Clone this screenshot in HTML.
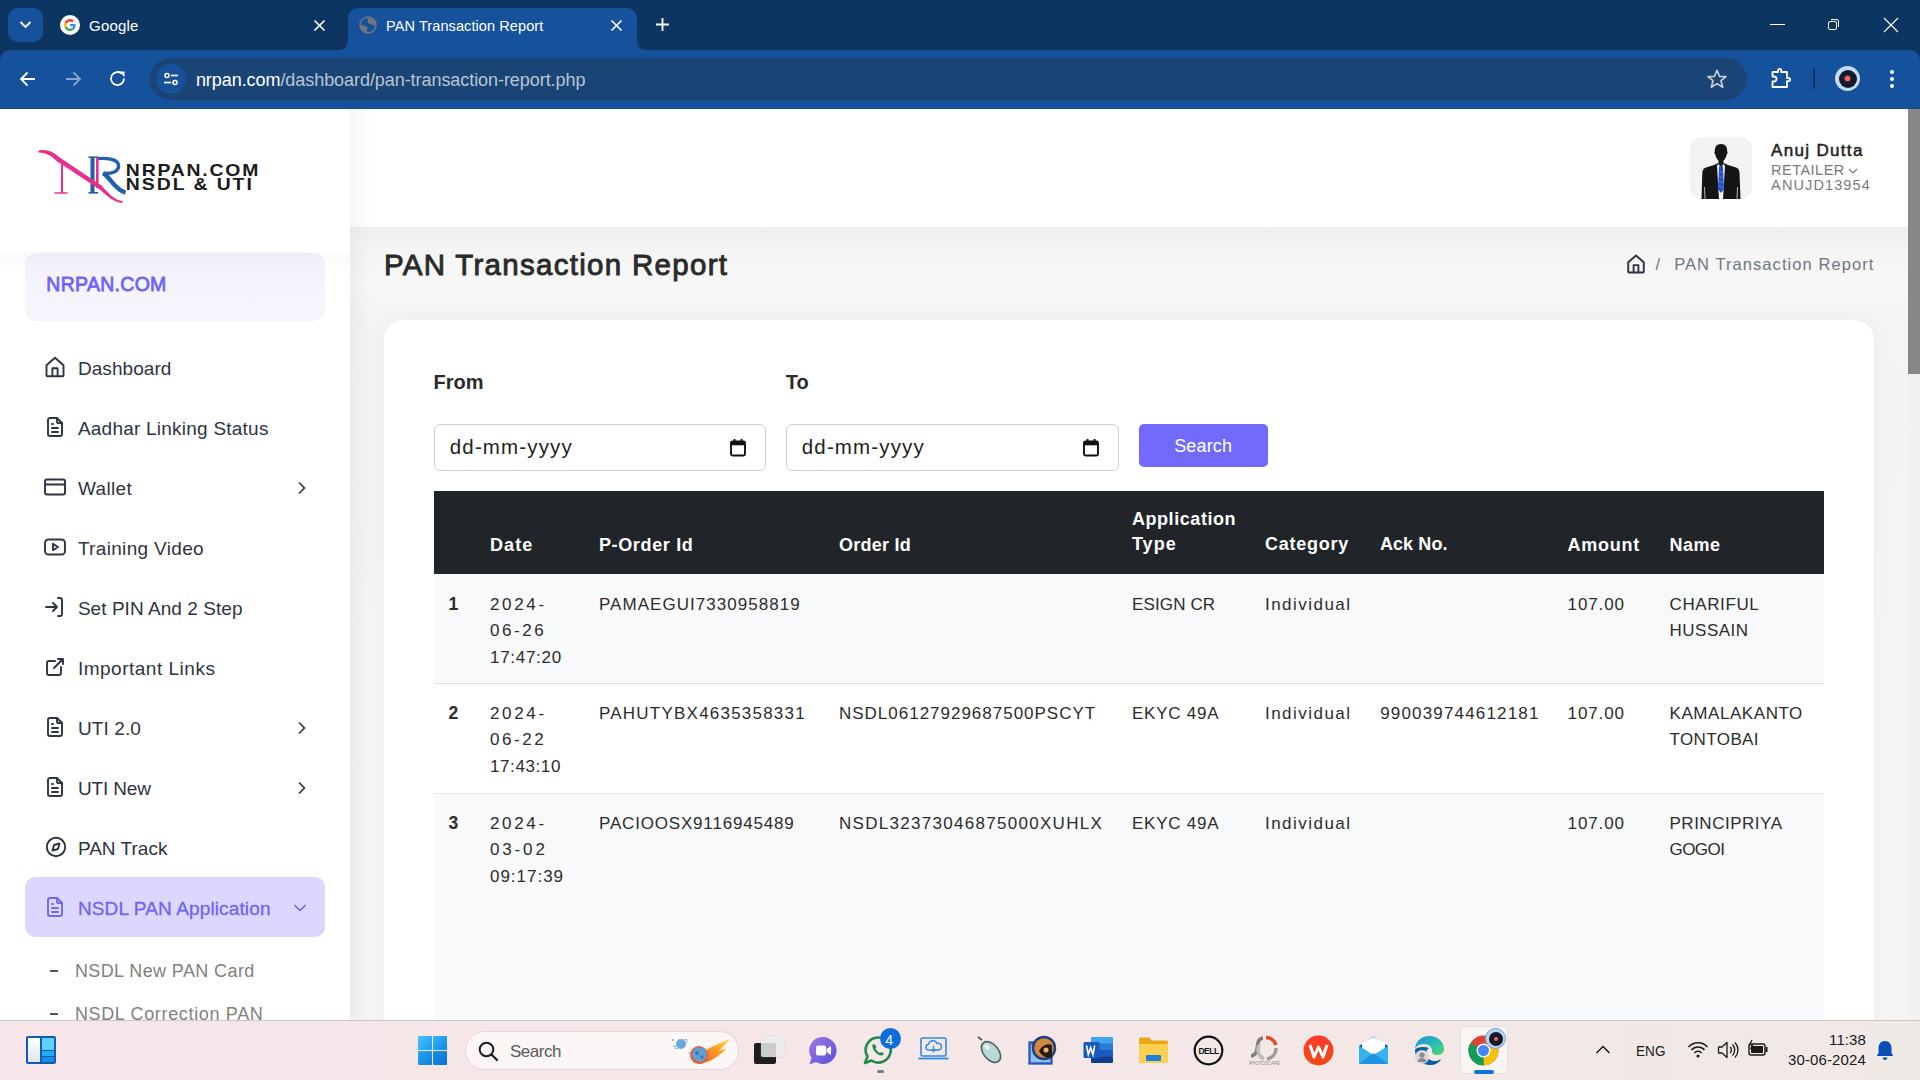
<!DOCTYPE html>
<html><head><meta charset="utf-8"><title>PAN Transaction Report</title>
<style>
*{margin:0;padding:0;box-sizing:border-box}
html,body{width:1920px;height:1080px;overflow:hidden;background:#f3f4f4;position:relative;font-family:"Liberation Sans",sans-serif}
.r{position:absolute}
.t{position:absolute;white-space:nowrap;font-family:"Liberation Sans",sans-serif}
</style></head>
<body>

<div class="r" style="left:0;top:0;width:1920px;height:70px;background:#0d3562"></div>
<div class="r" style="left:8px;top:8px;width:35px;height:34px;border-radius:10px;background:#15529b"></div>
<svg class="r" style="left:18px;top:17px" width="15" height="15" viewBox="0 0 15 15"><path d="M2.5 5 L7.5 10 L12.5 5" fill="none" stroke="#fff" stroke-width="1.8"/></svg>
<!-- google tab -->
<svg class="r" style="left:60px;top:15px" width="20" height="20" viewBox="0 0 20 20">
<circle cx="10" cy="10" r="10" fill="#fff"/>
<path d="M15.6 10.2c0-.4 0-.8-.1-1.2H10v2.3h3.2c-.1.7-.6 1.4-1.2 1.8l1.9 1.5c1.1-1 1.7-2.6 1.7-4.4z" fill="#4285F4"/>
<path d="M10 16c1.6 0 2.9-.5 3.9-1.4l-1.9-1.5c-.5.4-1.2.6-2 .6-1.5 0-2.8-1-3.3-2.4l-2 1.5C5.7 14.7 7.7 16 10 16z" fill="#34A853"/>
<path d="M6.7 11.3c-.1-.4-.2-.8-.2-1.3s.1-.9.2-1.3l-2-1.5C4.3 8 4 9 4 10s.3 2 .7 2.8l2-1.5z" fill="#FBBC05"/>
<path d="M10 6.4c.9 0 1.6.3 2.2.9l1.7-1.7C12.9 4.6 11.6 4 10 4 7.7 4 5.7 5.3 4.7 7.2l2 1.5C7.2 7.4 8.5 6.4 10 6.4z" fill="#EA4335"/>
</svg>
<svg class="r" style="left:313px;top:19px" width="13" height="13" viewBox="0 0 13 13"><path d="M1.5 1.5 L11.5 11.5 M11.5 1.5 L1.5 11.5" stroke="#fff" stroke-width="1.6"/></svg>
<!-- active tab -->
<div class="r" style="left:348px;top:8px;width:289px;height:43px;background:#15529b;border-radius:10px 10px 0 0"></div>
<svg class="r" style="left:338px;top:40px" width="10" height="10" viewBox="0 0 10 10"><path d="M0 10 Q10 10 10 0 L10 10 Z" fill="#15529b"/></svg>
<svg class="r" style="left:637px;top:40px" width="10" height="10" viewBox="0 0 10 10"><path d="M10 10 Q0 10 0 0 L0 10 Z" fill="#15529b"/></svg>
<svg class="r" style="left:359px;top:16px" width="18" height="18" viewBox="0 0 18 18"><circle cx="9" cy="9" r="8" fill="none" stroke="#71787f" stroke-width="1.5"/><path d="M8.2 2 C11 1.5 14.5 3 16 6 L16.5 9 C15.5 9.8 13.8 9.6 13 8.8 C12.3 8 11 8.3 9.8 7.6 C8.7 7 8.3 6.2 8.8 5.2 C9.2 4.2 8.5 3.3 8.2 2 Z" fill="#71787f"/><path d="M1.5 9.5 C3 9 4.8 9.3 6.3 9.9 C7.8 10.5 8.8 11.2 8.4 12.6 C8.1 13.8 7.6 14.5 8.3 16.3 C4.8 16.2 2 13.3 1.5 9.5 Z" fill="#71787f"/></svg>
<svg class="r" style="left:610px;top:19px" width="13" height="13" viewBox="0 0 13 13"><path d="M1.5 1.5 L11.5 11.5 M11.5 1.5 L1.5 11.5" stroke="#fff" stroke-width="1.6"/></svg>
<svg class="r" style="left:655px;top:17px" width="15" height="15" viewBox="0 0 15 15"><path d="M7.5 1 V14 M1 7.5 H14" stroke="#fff" stroke-width="1.8"/></svg>
<!-- window controls -->
<div class="r" style="left:1770px;top:24px;width:15px;height:1px;background:#fff"></div>
<svg class="r" style="left:1826px;top:16px" width="16" height="16" viewBox="0 0 16 16"><rect x="2.5" y="5.5" width="8" height="8" rx="1.5" fill="none" stroke="#fff" stroke-width="1"/><path d="M5 3.5 H11 Q12.5 3.5 12.5 5 V11" fill="none" stroke="#fff" stroke-width="1"/></svg>
<svg class="r" style="left:1883px;top:17px" width="16" height="16" viewBox="0 0 16 16"><path d="M1 1 L15 15 M15 1 L1 15" stroke="#fff" stroke-width="1.1"/></svg>
<!-- toolbar -->
<div class="r" style="left:0;top:50px;width:1920px;height:59px;background:#15529b;border-radius:10px 10px 0 0"></div>
<div class="r" style="left:0;top:108px;width:1920px;height:1px;background:#114b90"></div>
<svg class="r" style="left:18px;top:69px" width="20" height="20" viewBox="0 0 20 20"><path d="M17 10 H3.5 M9.5 3.5 L3 10 L9.5 16.5" fill="none" stroke="#fff" stroke-width="1.8"/></svg>
<svg class="r" style="left:63px;top:69px" width="20" height="20" viewBox="0 0 20 20"><path d="M3 10 H16.5 M10.5 3.5 L17 10 L10.5 16.5" fill="none" stroke="#8aa6cc" stroke-width="1.8"/></svg>
<svg class="r" style="left:108px;top:69px" width="20" height="20" viewBox="0 0 20 20"><path d="M16 9.5 A6.5 6.5 0 1 1 13.2 4.2" fill="none" stroke="#fff" stroke-width="1.8"/><path d="M11 2.5 H16.5 V8 Z" fill="#fff"/></svg>
<div class="r" style="left:150px;top:58px;width:1597px;height:42px;border-radius:21px;background:#1a4476"></div>
<div class="r" style="left:156px;top:64px;width:30px;height:30px;border-radius:15px;background:#15529b"></div>
<svg class="r" style="left:161px;top:69px" width="20" height="20" viewBox="0 0 20 20"><circle cx="6" cy="6.5" r="2" fill="none" stroke="#fff" stroke-width="1.6"/><path d="M10 6.5 H17" stroke="#fff" stroke-width="1.7"/><circle cx="14" cy="13.5" r="2" fill="none" stroke="#fff" stroke-width="1.6"/><path d="M3 13.5 H10" stroke="#fff" stroke-width="1.7"/></svg>
<svg class="r" style="left:1705px;top:67px" width="24" height="24" viewBox="0 0 24 24"><path d="M12 3.2 L14.5 9.3 L21 9.6 L16 13.7 L17.7 20.2 L12 16.6 L6.3 20.2 L8 13.7 L3 9.6 L9.5 9.3 Z" fill="none" stroke="#c7cbd1" stroke-width="1.7" stroke-linejoin="round"/></svg>
<svg class="r" style="left:1769px;top:66px" width="24" height="24" viewBox="0 0 24 24"><path d="M3.5 6 H9 V4.5 A1.6 1.6 0 0 1 12.2 4.5 V6 H18 V12 H19.5 A1.6 1.6 0 0 1 19.5 15.2 H18 V21 H3.5 V15.5 H5 A2.5 2.5 0 0 0 5 10.5 H3.5 Z" fill="none" stroke="#fff" stroke-width="1.8" stroke-linejoin="round"/></svg>
<div class="r" style="left:1813px;top:69px;width:2px;height:20px;background:#0f3464"></div>
<div class="r" style="left:1835px;top:66px;width:25px;height:25px;border-radius:50%;background:#c2dbf6"></div>
<div class="r" style="left:1838.5px;top:69.5px;width:18px;height:18px;border-radius:50%;background:#141a2a"></div>
<div class="r" style="left:1845px;top:76px;width:5px;height:5px;border-radius:50%;background:#ff5a6e;box-shadow:0 0 2px #ffb347"></div>
<div class="r" style="left:1890px;top:70px;width:4px;height:4px;border-radius:50%;background:#fff"></div>
<div class="r" style="left:1890px;top:77px;width:4px;height:4px;border-radius:50%;background:#fff"></div>
<div class="r" style="left:1890px;top:84px;width:4px;height:4px;border-radius:50%;background:#fff"></div>


<div class="r" style="left:350px;top:227px;width:1558px;height:793px;background:linear-gradient(#eef0f0 0px,#f5f5f5 30px,#f7f7f7 60px,#f4f4f4 90px,#f3f3f3 200px,#f5f5f5 400px)"></div>
<div class="r" style="left:0;top:109px;width:350px;height:911px;background:#fff"></div>
<div class="r" style="left:350px;top:109px;width:1558px;height:118px;background:#ffffff"></div>
<div class="r" style="left:350px;top:109px;width:22px;height:911px;background:linear-gradient(90deg,rgba(0,0,0,0.035),rgba(0,0,0,0))"></div>
<div class="r" style="left:1908px;top:109px;width:12px;height:911px;background:#f1f1f1"></div>
<div class="r" style="left:1908px;top:109px;width:12px;height:265px;background:#878787"></div>


<!-- logo -->
<svg class="r" style="left:30px;top:140px" width="100" height="70" viewBox="0 0 100 70" fill="none" stroke-linecap="butt">
 <path d="M62.5 17 V53" stroke="#1f5fae" stroke-width="4"/>
 <path d="M58.5 17.2 H68" stroke="#1f5fae" stroke-width="1.6"/>
 <path d="M58.5 52.8 H68" stroke="#1f5fae" stroke-width="1.6"/>
 <path d="M66 18.6 C78 17.6 88.6 19.5 88.6 26 C88.6 31.5 82 34 73.5 33.5" stroke="#1f5fae" stroke-width="3.4"/>
 <path d="M73 33 C80 37 85 50 95.5 52.5" stroke="#1f5fae" stroke-width="4.4"/>
 <path d="M8.5 10.6 C16 9 23 11.5 29 17 L71.5 45.5 C78 53 85 60.5 92.5 61 L92.5 63 C84 62.5 77 56 69 49 L26.5 21 C21 15.5 15 12.5 8.5 12.6 Z" fill="#e8308a" stroke="none"/>
 
 
 <path d="M32 21 V53" stroke="#e8308a" stroke-width="2"/>
 <path d="M24.5 53 H37.5" stroke="#e8308a" stroke-width="1.5"/>
 <path d="M67.3 17.5 V48" stroke="#e8308a" stroke-width="2.6"/>
</svg>
<div class="r" style="left:25px;top:253px;width:300px;height:68px;border-radius:12px;background:linear-gradient(#f2f1fa,#f5f4fd 40%,#f6f5fe)"></div>
<div class="r" style="left:0;top:252px;width:350px;height:24px;background:linear-gradient(rgba(0,0,0,0.02),rgba(0,0,0,0))"></div>
<div class="r" style="left:25px;top:877px;width:300px;height:60px;border-radius:10px;background:#dcd8fd"></div>

<svg class="r" style="left:43px;top:355px" width="24" height="24" viewBox="0 0 24 24" fill="none" stroke="#2e3441" stroke-width="1.9" stroke-linecap="round" stroke-linejoin="round"><path d="M3.5 20.2 V10.2 L12 2.8 L20.5 10.2 V20.2 Q20.5 21.2 19.5 21.2 H4.5 Q3.5 21.2 3.5 20.2 Z"/><path d="M9.4 21 V13.2 H14.6 V21"/></svg>
<svg class="r" style="left:43px;top:415px" width="24" height="24" viewBox="0 0 24 24" fill="none" stroke="#2e3441" stroke-width="1.9" stroke-linecap="round" stroke-linejoin="round"><path d="M14 3 V7 A1 1 0 0 0 15 8 H19"/><path d="M17 21 H7 A2 2 0 0 1 5 19 V5 A2 2 0 0 1 7 3 H14 L19 8 V19 A2 2 0 0 1 17 21 Z"/><path d="M9 9 H10 M9 13 H15 M9 17 H15"/></svg>
<svg class="r" style="left:43px;top:475px" width="24" height="24" viewBox="0 0 24 24" fill="none" stroke="#2e3441" stroke-width="1.9" stroke-linecap="round" stroke-linejoin="round"><rect x="2" y="4.5" width="20" height="15" rx="2"/><path d="M2.5 9.5 H21.5"/></svg>
<svg class="r" style="left:43px;top:535px" width="24" height="24" viewBox="0 0 24 24" fill="none" stroke="#2e3441" stroke-width="1.9" stroke-linecap="round" stroke-linejoin="round"><rect x="2" y="4.5" width="20" height="15" rx="3.5"/><path d="M10 8.8 L15 12 L10 15.2 Z"/></svg>
<svg class="r" style="left:43px;top:595px" width="24" height="24" viewBox="0 0 24 24" fill="none" stroke="#2e3441" stroke-width="1.9" stroke-linecap="round" stroke-linejoin="round"><path d="M15 3 H17 A2 2 0 0 1 19 5 V19 A2 2 0 0 1 17 21 H15"/><path d="M3 12 H14 M10 8 L14 12 L10 16"/></svg>
<svg class="r" style="left:43px;top:655px" width="24" height="24" viewBox="0 0 24 24" fill="none" stroke="#2e3441" stroke-width="1.9" stroke-linecap="round" stroke-linejoin="round"><path d="M12 6 H6 A2 2 0 0 0 4 8 V18 A2 2 0 0 0 6 20 H16 A2 2 0 0 0 18 18 V12"/><path d="M11 13 L20 4 M15 4 H20 V9"/></svg>
<svg class="r" style="left:43px;top:715px" width="24" height="24" viewBox="0 0 24 24" fill="none" stroke="#2e3441" stroke-width="1.9" stroke-linecap="round" stroke-linejoin="round"><path d="M14 3 V7 A1 1 0 0 0 15 8 H19"/><path d="M17 21 H7 A2 2 0 0 1 5 19 V5 A2 2 0 0 1 7 3 H14 L19 8 V19 A2 2 0 0 1 17 21 Z"/><path d="M9 9 H10 M9 13 H15 M9 17 H15"/></svg>
<svg class="r" style="left:43px;top:775px" width="24" height="24" viewBox="0 0 24 24" fill="none" stroke="#2e3441" stroke-width="1.9" stroke-linecap="round" stroke-linejoin="round"><path d="M14 3 V7 A1 1 0 0 0 15 8 H19"/><path d="M17 21 H7 A2 2 0 0 1 5 19 V5 A2 2 0 0 1 7 3 H14 L19 8 V19 A2 2 0 0 1 17 21 Z"/><path d="M9 9 H10 M9 13 H15 M9 17 H15"/></svg>
<svg class="r" style="left:44px;top:835px" width="24" height="24" viewBox="0 0 24 24" fill="none" stroke="#2e3441" stroke-width="1.9" stroke-linecap="round" stroke-linejoin="round"><circle cx="12" cy="12" r="9.2"/><path d="M8.5 15.5 L10 10 L15.5 8.5 L14 14 Z"/></svg>
<svg class="r" style="left:43px;top:895px" width="24" height="24" viewBox="0 0 24 24" fill="none" stroke="#7367f0" stroke-width="1.9" stroke-linecap="round" stroke-linejoin="round"><path d="M14 3 V7 A1 1 0 0 0 15 8 H19"/><path d="M17 21 H7 A2 2 0 0 1 5 19 V5 A2 2 0 0 1 7 3 H14 L19 8 V19 A2 2 0 0 1 17 21 Z"/><path d="M9 9 H10 M9 13 H15 M9 17 H15"/></svg>
<svg class="r" style="left:295px;top:480.5px" width="14" height="14" viewBox="0 0 14 14"><path d="M4.5 2 L9.5 7 L4.5 12" fill="none" stroke="#2e3441" stroke-width="1.7" stroke-linecap="round" stroke-linejoin="round"/></svg>
<svg class="r" style="left:295px;top:720.5px" width="14" height="14" viewBox="0 0 14 14"><path d="M4.5 2 L9.5 7 L4.5 12" fill="none" stroke="#2e3441" stroke-width="1.7" stroke-linecap="round" stroke-linejoin="round"/></svg>
<svg class="r" style="left:295px;top:780.5px" width="14" height="14" viewBox="0 0 14 14"><path d="M4.5 2 L9.5 7 L4.5 12" fill="none" stroke="#2e3441" stroke-width="1.7" stroke-linecap="round" stroke-linejoin="round"/></svg>
<svg class="r" style="left:292.5px;top:900.5px" width="14" height="14" viewBox="0 0 14 14"><path d="M2 4.5 L7 9.5 L12 4.5" fill="none" stroke="#7367f0" stroke-width="1.7" stroke-linecap="round" stroke-linejoin="round"/></svg>
<div class="r" style="left:50px;top:970px;width:8px;height:2px;background:#555"></div>
<div class="r" style="left:50px;top:1013px;width:8px;height:2px;background:#555"></div>

<div class="r" style="left:1690px;top:137px;width:62px;height:62px;border-radius:12px;background:#f3f3f3"></div>
<svg class="r" style="left:1690px;top:137px" width="62" height="62" viewBox="0 0 62 62">
 <path d="M31 7 C26.5 7 24.5 10.5 24.8 14.5 C24.2 14.8 24.3 17 25.3 17.5 C25.8 20 27 22.5 28.5 23.5 L28.5 26 L24 28 L16 30.5 C13.5 31.3 12.5 33 12.3 36 L11.5 62 H50.5 L49.5 36 C49.3 33 48.5 31.3 46 30.5 L38 28 L33.5 26 L33.5 23.5 C35 22.5 36.2 20 36.7 17.5 C37.7 17 37.8 14.8 37.2 14.5 C37.5 10.5 35.5 7 31 7 Z" fill="#151515"/>
 <path d="M28.3 27 L31 30 L33.7 27 L35 29 L33 62 H29 L27 29 Z" fill="#f2f2f2"/>
 <path d="M29.5 28.5 H32.5 L33 31 L34 52 L31 56 L28 52 L29 31 Z" fill="#2350c8"/>
 <path d="M29 34 L33 36 M28.8 39 L33.5 41 M28.6 44 L33.7 46 M28.5 49 L33.8 51" stroke="#5b86e6" stroke-width="0.9"/>
 <path d="M14.5 50 L15 62 M47.5 50 L47 62" stroke="#e0e0e0" stroke-width="0.8"/>
</svg>

<svg class="r" style="left:1847px;top:166px" width="12" height="10" viewBox="0 0 12 10"><path d="M2 3 L6 7 L10 3" fill="none" stroke="#7a7a7a" stroke-width="1.2"/></svg>
<svg class="r" style="left:1624.5px;top:253px" width="22" height="22" viewBox="0 0 24 24" fill="none" stroke="#2e3441" stroke-width="2.1" stroke-linecap="round" stroke-linejoin="round"><path d="M3.5 20.2 V10.2 L12 2.8 L20.5 10.2 V20.2 Q20.5 21.2 19.5 21.2 H4.5 Q3.5 21.2 3.5 20.2 Z"/><path d="M9.4 21 V13.2 H14.6 V21"/></svg>

<div class="r" style="left:384px;top:320px;width:1490px;height:760px;background:#fff;border-radius:20px;box-shadow:0 0 24px rgba(0,0,0,0.035)"></div>
<div class="r" style="left:434px;top:424px;width:332px;height:47px;border:1px solid #cdd2d9;border-radius:6px;background:#fff"></div>
<div class="r" style="left:786px;top:424px;width:333px;height:47px;border:1px solid #cdd2d9;border-radius:6px;background:#fff"></div>
<div class="r" style="left:1139px;top:424px;width:129px;height:43px;border-radius:5px;background:#7469fd"></div>
<div class="r" style="left:434px;top:491px;width:1390px;height:83px;background:#212529"></div>
<div class="r" style="left:434px;top:574px;width:1390px;height:110px;background:#f8f9fb;border-bottom:1px solid #dee2e6"></div>
<div class="r" style="left:434px;top:684px;width:1390px;height:110px;background:#fff;border-bottom:1px solid #dee2e6"></div>
<div class="r" style="left:434px;top:794px;width:1390px;height:226px;background:#f8f9fb"></div>

<svg class="r" style="left:728px;top:437px" width="20" height="20" viewBox="0 0 20 20"><rect x="3" y="4.5" width="14" height="14" rx="1.5" fill="none" stroke="#111" stroke-width="1.9"/><rect x="3" y="4.5" width="14" height="3.8" fill="#111"/><path d="M6.5 2 V5 M13.5 2 V5" stroke="#111" stroke-width="1.9"/></svg>
<svg class="r" style="left:1081px;top:437px" width="20" height="20" viewBox="0 0 20 20"><rect x="3" y="4.5" width="14" height="14" rx="1.5" fill="none" stroke="#111" stroke-width="1.9"/><rect x="3" y="4.5" width="14" height="3.8" fill="#111"/><path d="M6.5 2 V5 M13.5 2 V5" stroke="#111" stroke-width="1.9"/></svg>

<div class="r" style="left:0;top:1020px;width:1920px;height:60px;background:linear-gradient(90deg,#f7e6e9 0%,#f6e6e8 40%,#f3e8e6 75%,#efe9e6 100%);border-top:1px solid #cfc8c9"></div>
<!-- widgets -->
<div class="r" style="left:26px;top:1036px;width:30px;height:28px;border-radius:2px;background:#0f5cb5"></div>
<div class="r" style="left:28px;top:1038px;width:12px;height:24px;background:linear-gradient(#fff,#dfe6ee)"></div>
<div class="r" style="left:42px;top:1038px;width:12px;height:12px;background:#5fd0f8"></div>
<div class="r" style="left:42px;top:1051px;width:12px;height:5px;background:#2aa5ef"></div>
<div class="r" style="left:42px;top:1057px;width:12px;height:5px;background:#1b8de5"></div>
<!-- windows -->
<div class="r" style="left:418px;top:1036px;width:14px;height:14px;border-radius:1px;background:linear-gradient(135deg,#4cc2ff,#1a9aef)"></div>
<div class="r" style="left:433px;top:1036px;width:14px;height:14px;border-radius:1px;background:linear-gradient(135deg,#36b3fb,#0f86e3)"></div>
<div class="r" style="left:418px;top:1051px;width:14px;height:14px;border-radius:1px;background:linear-gradient(135deg,#2aa7f5,#0c7fdc)"></div>
<div class="r" style="left:433px;top:1051px;width:14px;height:14px;border-radius:1px;background:linear-gradient(135deg,#1591ea,#0a6fcf)"></div>
<!-- search -->
<div class="r" style="left:465px;top:1031px;width:274px;height:39px;border-radius:20px;background:#fdf6f6;border:1px solid #e3d6d7"></div>
<svg class="r" style="left:477px;top:1040px" width="22" height="22" viewBox="0 0 22 22"><circle cx="9.5" cy="9.5" r="6.8" fill="none" stroke="#1c1c1c" stroke-width="2"/><path d="M14.5 14.5 L20 20" stroke="#1c1c1c" stroke-width="2.2" stroke-linecap="round"/></svg>
<svg class="r" style="left:670px;top:1036px" width="64" height="30" viewBox="0 0 64 30">
 <defs><linearGradient id="fl" x1="0" y1="1" x2="1" y2="0"><stop offset="0" stop-color="#f2561d"/><stop offset="0.6" stop-color="#f9a126"/><stop offset="1" stop-color="#ffe14a"/></linearGradient></defs>
 <path d="M26 24 C34 12 48 8 60 3 C55 9 52 12 50 14 C53 14 55 13 57 12 C50 20 40 26 30 28 Z" fill="url(#fl)"/>
 <circle cx="29" cy="19" r="9" fill="#ef5a2a"/><circle cx="29.5" cy="18.5" r="7.3" fill="#5e9fd6"/>
 <circle cx="27" cy="17" r="1.8" fill="#3d6fa8"/><circle cx="32" cy="21" r="1.4" fill="#3d6fa8"/>
 <circle cx="11" cy="8" r="5" fill="#6aa9de"/><ellipse cx="11" cy="8" rx="7.5" ry="2" fill="none" stroke="#6aa9de" stroke-width="0.8" transform="rotate(-35 11 8)"/>
 <circle cx="3" cy="4" r="1" fill="#6aa9de"/><circle cx="4" cy="10" r="0.8" fill="#6aa9de"/><circle cx="19" cy="17" r="0.8" fill="#6aa9de"/>
</svg>
<!-- task view -->
<div class="r" style="left:754px;top:1043px;width:22px;height:21px;border-radius:2px;background:#1e1e1e"></div>
<div class="r" style="left:761px;top:1036px;width:23px;height:21px;border-radius:2px;background:rgba(235,235,235,0.85);box-shadow:0 0 1px #bbb"></div>
<!-- chat -->
<svg class="r" style="left:808px;top:1036px" width="30" height="29" viewBox="0 0 30 29"><defs><linearGradient id="tm" x1="0" y1="0" x2="1" y2="1"><stop offset="0" stop-color="#9b7ae6"/><stop offset="1" stop-color="#5b4fd4"/></linearGradient></defs><path d="M15 1 A13.5 13.5 0 1 1 8 26 L1.5 28.5 L3.5 22 A13.5 13.5 0 0 1 15 1 Z" fill="url(#tm)"/><rect x="8" y="9.5" width="10" height="10" rx="2" fill="#fff"/><path d="M18.5 13 L23 10 V19 L18.5 16 Z" fill="#fff"/></svg>
<!-- whatsapp -->
<svg class="r" style="left:863px;top:1035px" width="32" height="31" viewBox="0 0 32 31"><path d="M15 2.5 A12.5 12.5 0 1 1 8.5 25.5 L2 28 L4.5 21.5 A12.5 12.5 0 0 1 15 2.5 Z" fill="none" stroke="#1f8a4c" stroke-width="2.6" stroke-linejoin="round"/><path d="M10 9 C9 10 9 12.5 11 15.5 C13 18.5 16 20.5 18.5 20.5 C20 20.5 20.8 19.5 20.8 18.5 L18.5 17 L17 18 C15.5 17.5 13.5 15.5 12.5 13.8 L13.5 12.3 L12 9.5 Z" fill="#1f8a4c"/></svg>
<div class="r" style="left:880px;top:1028px;width:21px;height:21px;border-radius:50%;background:#0d6edb"></div>
<div class="r" style="left:877px;top:1070px;width:7px;height:3px;border-radius:2px;background:#7a7a7a"></div>
<!-- cloud laptop -->
<svg class="r" style="left:918px;top:1037px" width="31" height="24" viewBox="0 0 31 24"><rect x="3" y="1" width="25" height="18" rx="1.5" fill="none" stroke="#2c8ce0" stroke-width="1.6"/><path d="M0.5 21.5 H30.5" stroke="#2c8ce0" stroke-width="1.8"/><path d="M10 13 A3 3 0 0 1 10.5 7.2 A4.5 4.5 0 0 1 19 6.5 A3.2 3.2 0 0 1 21 13 Z" fill="none" stroke="#2c8ce0" stroke-width="1.4"/><path d="M15.5 8.5 V14.5 M13.3 12.3 L15.5 14.5 L17.7 12.3" fill="none" stroke="#2c8ce0" stroke-width="1.3"/></svg>
<!-- mouse -->
<svg class="r" style="left:975px;top:1035px" width="30" height="31" viewBox="0 0 30 31"><path d="M3 2 L7 5" stroke="#555" stroke-width="1.8"/><ellipse cx="16" cy="17" rx="7.5" ry="12" transform="rotate(-40 16 17)" fill="#b9d9d6" stroke="#53625f" stroke-width="1.6"/><ellipse cx="12" cy="12" rx="2" ry="3" transform="rotate(-40 12 12)" fill="#e9f4f3"/></svg>
<!-- photo magnifier -->
<svg class="r" style="left:1028px;top:1035px" width="30" height="30" viewBox="0 0 30 30"><rect x="1" y="7" width="23" height="22" fill="#3a79d4" stroke="#2345a8" stroke-width="1.2"/><rect x="3" y="10" width="19" height="17" fill="#8fc2e8"/><circle cx="16" cy="13" r="11" fill="#d28a3a" stroke="#1d3f86" stroke-width="2.5"/><path d="M11 16 C14 10 20 8 24 10 L24 22 C20 24 14 22 11 16 Z" fill="#2b1c10"/><circle cx="18" cy="15" r="2.5" fill="#e7b27a"/></svg>
<!-- word -->
<svg class="r" style="left:1083px;top:1036px" width="31" height="28" viewBox="0 0 31 28"><rect x="8" y="1" width="22" height="26" rx="1.5" fill="#2b7cd3"/><rect x="8" y="1" width="22" height="6.5" rx="1.5" fill="#41a5ee"/><rect x="8" y="14" width="22" height="6.5" fill="#185abd"/><rect x="8" y="20.5" width="22" height="6.5" rx="1.5" fill="#103f91"/><rect x="0.5" y="6" width="16" height="16" rx="1.5" fill="#185abd"/><path d="M3.5 9.5 L5.3 18.5 L7.6 11.5 L9.9 18.5 L11.7 9.5" fill="none" stroke="#fff" stroke-width="1.6"/></svg>
<!-- folder -->
<svg class="r" style="left:1138px;top:1036px" width="31" height="28" viewBox="0 0 31 28"><path d="M1 3 Q1 1.5 2.5 1.5 H11 L14 4.5 H28.5 Q30 4.5 30 6 V26 Q30 27 28.5 27 H2.5 Q1 27 1 25.5 Z" fill="#e8a817"/><path d="M1 8 H30 V25.5 Q30 27 28.5 27 H2.5 Q1 27 1 25.5 Z" fill="#fcd04f"/><rect x="8" y="19" width="15" height="6" rx="1" fill="#1b7fdb"/></svg>
<!-- dell -->
<svg class="r" style="left:1193px;top:1035px" width="31" height="31" viewBox="0 0 31 31"><circle cx="15.5" cy="15.5" r="13.8" fill="none" stroke="#111" stroke-width="2.2"/><text x="15.5" y="18.5" font-family="Liberation Sans" font-weight="bold" font-size="8.5" text-anchor="middle" fill="#111" letter-spacing="-0.5">DELL</text></svg>
<!-- photoscape -->
<svg class="r" style="left:1249px;top:1035px" width="31" height="31" viewBox="0 0 31 31"><path d="M17 2.5 A10.5 10.5 0 0 1 27 10" fill="none" stroke="#e8452c" stroke-width="3.5"/><path d="M27 13 A10.5 10.5 0 0 1 18 24" fill="none" stroke="#9c9c9c" stroke-width="3.5"/><path d="M14 3 C6 4 10 16 6 19 C4 20.5 3 21 2 21" fill="none" stroke="#7d7d7d" stroke-width="3.5"/><path d="M15 24 A10.5 10.5 0 0 1 10 10" fill="none" stroke="#bdbdbd" stroke-width="3.5"/><text x="15.5" y="30" font-family="Liberation Sans" font-size="4.5" text-anchor="middle" fill="#888">PHOTOSCAPE</text></svg>
<!-- wps -->
<svg class="r" style="left:1303px;top:1035px" width="31" height="31" viewBox="0 0 31 31"><defs><linearGradient id="wp" x1="0" y1="0" x2="0" y2="1"><stop offset="0" stop-color="#ff3a2a"/><stop offset="1" stop-color="#ee4a12"/></linearGradient></defs><circle cx="15.5" cy="15.5" r="15" fill="url(#wp)"/><path d="M7 10 L11 22 L15.5 12 L20 22 L24 10" fill="none" stroke="#fff" stroke-width="3" stroke-linejoin="round"/></svg>
<!-- mail -->
<svg class="r" style="left:1358px;top:1035px" width="31" height="30" viewBox="0 0 31 30"><path d="M1 11 L15.5 1.5 L30 11 V29 H1 Z" fill="#0e5bb5"/><path d="M4 8 L15.5 2 L27 8 V16 L15.5 22 L4 16 Z" fill="#fff"/><path d="M1 11 L15.5 20 L30 11 V29 H1 Z" fill="#33b2f0"/><path d="M1 29 L15.5 18 L30 29 Z" fill="#1f8fe0" opacity="0.9"/></svg>
<!-- edge -->
<svg class="r" style="left:1413px;top:1035px" width="32" height="31" viewBox="0 0 32 31"><defs><linearGradient id="eg" x1="0" y1="0" x2="1" y2="1"><stop offset="0" stop-color="#1a8fe0"/><stop offset="0.6" stop-color="#2cc1b3"/><stop offset="1" stop-color="#5dd85a"/></linearGradient></defs><path d="M2 15 C2 6 9 1 16 1 C25 1 31 7 31 14 C31 18 28 20 24 20 C20 20 19 18 19 16 C19 11 15 9 11 9 C6 9 2 12 2 15 Z" fill="url(#eg)"/><path d="M2 15 C2 24 9 30 17 30 C22 30 26 28 28 24 C24 27 17 27 14 22 C12 19 13 15 16 13 C11 11 3 12 2 15 Z" fill="#0c59a4"/><circle cx="9" cy="22" r="7" fill="#d9d9d9"/><circle cx="9" cy="20" r="2.6" fill="#8a8a8a"/><path d="M4.5 27 C5 24 7 23 9 23 C11 23 13 24 13.5 27" fill="#8a8a8a"/></svg>
<!-- chrome active -->
<div class="r" style="left:1460px;top:1026px;width:48px;height:48px;border-radius:5px;background:rgba(250,250,250,0.75);border:1px solid rgba(210,210,210,0.6)"></div>
<svg class="r" style="left:1468px;top:1035px" width="31" height="31" viewBox="0 0 31 31"><circle cx="15.5" cy="15.5" r="15" fill="#db4437"/><path d="M15.5 15.5 L28.5 8 A15 15 0 0 1 15.5 30.5 Z" fill="#f4c20d"/><path d="M15.5 15.5 L15.5 30.5 A15 15 0 0 1 2.5 8 Z" fill="#0f9d58"/><circle cx="15.5" cy="15.5" r="7" fill="#fff"/><circle cx="15.5" cy="15.5" r="5.5" fill="#4285f4"/></svg>
<div class="r" style="left:1485px;top:1028px;width:21px;height:21px;border-radius:50%;background:#b8d4f0;border:1px solid #7f9cc0"></div>
<div class="r" style="left:1488.5px;top:1031.5px;width:14px;height:14px;border-radius:50%;background:#141a2a"></div>
<div class="r" style="left:1493.5px;top:1036.5px;width:4px;height:4px;border-radius:50%;background:#ff5a6e"></div>
<div class="r" style="left:1474px;top:1070px;width:20px;height:4px;border-radius:2px;background:#0a72d6"></div>
<!-- tray -->
<svg class="r" style="left:1594px;top:1043px" width="18" height="12" viewBox="0 0 18 12"><path d="M2.5 10 L9 3.5 L15.5 10" fill="none" stroke="#1a1a1a" stroke-width="1.5"/></svg>
<svg class="r" style="left:1687px;top:1041px" width="22" height="17" viewBox="0 0 22 17"><path d="M1.5 6 A13 13 0 0 1 20.5 6" fill="none" stroke="#1a1a1a" stroke-width="1.5"/><path d="M4.5 9 A8.5 8.5 0 0 1 17.5 9" fill="none" stroke="#1a1a1a" stroke-width="1.5"/><path d="M7.5 12 A4.5 4.5 0 0 1 14.5 12" fill="none" stroke="#1a1a1a" stroke-width="1.5"/><circle cx="11" cy="15" r="1.5" fill="#1a1a1a"/></svg>
<svg class="r" style="left:1717px;top:1041px" width="22" height="18" viewBox="0 0 22 18"><path d="M1.5 6 H5 L10 1.5 V16.5 L5 12 H1.5 Z" fill="none" stroke="#1a1a1a" stroke-width="1.3" stroke-linejoin="round"/><path d="M13 6 A4 4 0 0 1 13 12 M15.5 3.5 A8 8 0 0 1 15.5 14.5 M18 1.5 A11 11 0 0 1 18 16.5" fill="none" stroke="#1a1a1a" stroke-width="1.3"/></svg>
<svg class="r" style="left:1747px;top:1039px" width="22" height="18" viewBox="0 0 22 18"><rect x="2" y="5" width="16" height="11" rx="2" fill="none" stroke="#1a1a1a" stroke-width="1.4"/><rect x="4" y="7" width="12" height="7" fill="#1a1a1a"/><rect x="18.5" y="8" width="2" height="5" fill="#1a1a1a"/><path d="M5 1 L2.5 6 H5.5 L3.5 10" fill="none" stroke="#1a1a1a" stroke-width="1.2"/></svg>
<svg class="r" style="left:1876px;top:1040px" width="18" height="21" viewBox="0 0 18 21"><path d="M9 1 C4.5 1 2.5 4.5 2.5 8 V13 L0.8 16 H17.2 L15.5 13 V8 C15.5 4.5 13.5 1 9 1 Z" fill="#0a4fb5"/><path d="M6.5 17.5 A2.5 2.5 0 0 0 11.5 17.5 Z" fill="#0a4fb5"/></svg>

<div class="t" style="left:89.1px;top:18.2px;font-size:15px;line-height:15px;color:#ffffff;letter-spacing:0.17px">Google</div>
<div class="t" style="left:386.1px;top:18.7px;font-size:14.5px;line-height:14.5px;color:#ffffff;letter-spacing:0.09px">PAN Transaction Report</div>
<div class="t" style="left:195.9px;top:70.7px;font-size:18px;line-height:18px;color:#ffffff;letter-spacing:-0.06px">nrpan.com<span style="color:#b8c4d4">/dashboard/pan-transaction-report.php</span></div>
<div class="t" style="left:126.0px;top:161.8px;font-size:17px;line-height:17px;color:#1a1a1a;letter-spacing:1.58px;font-weight:bold;transform:scaleX(1.140);transform-origin:1.0px 0">NRPAN.COM</div>
<div class="t" style="left:126.0px;top:176.0px;font-size:17px;line-height:17px;color:#1a1a1a;letter-spacing:1.71px;font-weight:bold;transform:scaleX(1.140);transform-origin:1.0px 0">NSDL &amp; UTI</div>
<div class="t" style="left:46.3px;top:274.9px;font-size:19.5px;line-height:19.5px;color:#6f65f6;letter-spacing:0.29px;-webkit-text-stroke:0.8px #6f65f6">NRPAN.COM</div>
<div class="t" style="left:77.9px;top:358.9px;font-size:19px;line-height:19px;color:#2e3441;letter-spacing:0.07px">Dashboard</div>
<div class="t" style="left:77.9px;top:418.9px;font-size:19px;line-height:19px;color:#2e3441;letter-spacing:0.23px">Aadhar Linking Status</div>
<div class="t" style="left:77.9px;top:478.9px;font-size:19px;line-height:19px;color:#2e3441;letter-spacing:0.37px">Wallet</div>
<div class="t" style="left:77.9px;top:538.9px;font-size:19px;line-height:19px;color:#2e3441;letter-spacing:0.33px">Training Video</div>
<div class="t" style="left:77.9px;top:598.9px;font-size:19px;line-height:19px;color:#2e3441;letter-spacing:0.05px">Set PIN And 2 Step</div>
<div class="t" style="left:77.9px;top:658.9px;font-size:19px;line-height:19px;color:#2e3441;letter-spacing:0.51px">Important Links</div>
<div class="t" style="left:77.9px;top:718.9px;font-size:19px;line-height:19px;color:#2e3441;letter-spacing:0.12px">UTI 2.0</div>
<div class="t" style="left:77.9px;top:778.9px;font-size:19px;line-height:19px;color:#2e3441;letter-spacing:-0.15px">UTI New</div>
<div class="t" style="left:77.9px;top:838.9px;font-size:19px;line-height:19px;color:#2e3441;letter-spacing:0.02px">PAN Track</div>
<div class="t" style="left:77.9px;top:898.9px;font-size:19px;line-height:19px;color:#6f65f0;letter-spacing:0.13px;-webkit-text-stroke:0.3px #6f65f0">NSDL PAN Application</div>
<div class="t" style="left:74.9px;top:961.7px;font-size:18px;line-height:18px;color:#808080;letter-spacing:0.40px">NSDL New PAN Card</div>
<div class="t" style="left:74.9px;top:1004.7px;font-size:18px;line-height:18px;color:#808080;letter-spacing:0.66px">NSDL Correction PAN</div>
<div class="t" style="left:1771.0px;top:141.6px;font-size:17px;line-height:17px;color:#222222;letter-spacing:1.33px;-webkit-text-stroke:0.5px #222">Anuj Dutta</div>
<div class="t" style="left:1771.1px;top:162.9px;font-size:14.5px;line-height:14.5px;color:#7a7a7a;letter-spacing:0.48px">RETAILER</div>
<div class="t" style="left:1771.1px;top:177.7px;font-size:14.5px;line-height:14.5px;color:#7a7a7a;letter-spacing:1.11px">ANUJD13954</div>
<div class="t" style="left:384.0px;top:249.7px;font-size:29.5px;line-height:29.5px;color:#2a2a2a;letter-spacing:1.29px;-webkit-text-stroke:0.9px #2a2a2a">PAN Transaction Report</div>
<div class="t" style="left:1655.5px;top:255.5px;font-size:16.5px;line-height:16.5px;color:#6e7782;letter-spacing:0.00px">/</div>
<div class="t" style="left:1674.2px;top:255.5px;font-size:16.5px;line-height:16.5px;color:#6e7782;letter-spacing:1.07px">PAN Transaction Report</div>
<div class="t" style="left:433.4px;top:372.3px;font-size:20px;line-height:20px;color:#2b2b2b;letter-spacing:0.05px;font-weight:bold">From</div>
<div class="t" style="left:785.8px;top:372.3px;font-size:20px;line-height:20px;color:#2b2b2b;letter-spacing:0.05px;font-weight:bold">To</div>
<div class="t" style="left:449.8px;top:437.3px;font-size:20.5px;line-height:20.5px;color:#222222;letter-spacing:1.14px">dd-mm-yyyy</div>
<div class="t" style="left:801.8px;top:437.3px;font-size:20.5px;line-height:20.5px;color:#222222;letter-spacing:1.14px">dd-mm-yyyy</div>
<div class="t" style="left:1174.2px;top:436.8px;font-size:18px;line-height:18px;color:#ffffff;letter-spacing:0.14px">Search</div>
<div class="t" style="left:489.9px;top:535.7px;font-size:18px;line-height:18px;color:#ffffff;letter-spacing:1.14px;font-weight:bold">Date</div>
<div class="t" style="left:598.9px;top:535.7px;font-size:18px;line-height:18px;color:#ffffff;letter-spacing:0.66px;font-weight:bold">P-Order Id</div>
<div class="t" style="left:838.9px;top:535.7px;font-size:18px;line-height:18px;color:#ffffff;letter-spacing:0.28px;font-weight:bold">Order Id</div>
<div class="t" style="left:1131.9px;top:509.7px;font-size:18px;line-height:18px;color:#ffffff;letter-spacing:0.57px;font-weight:bold">Application</div>
<div class="t" style="left:1131.9px;top:535.3px;font-size:18px;line-height:18px;color:#ffffff;letter-spacing:1.05px;font-weight:bold">Type</div>
<div class="t" style="left:1264.9px;top:535.3px;font-size:18px;line-height:18px;color:#ffffff;letter-spacing:0.75px;font-weight:bold">Category</div>
<div class="t" style="left:1379.9px;top:535.3px;font-size:18px;line-height:18px;color:#ffffff;letter-spacing:0.10px;font-weight:bold">Ack No.</div>
<div class="t" style="left:1567.5px;top:535.5px;font-size:18px;line-height:18px;color:#ffffff;letter-spacing:0.75px;font-weight:bold">Amount</div>
<div class="t" style="left:1669.4px;top:535.5px;font-size:18px;line-height:18px;color:#ffffff;letter-spacing:0.54px;font-weight:bold">Name</div>
<div class="t" style="left:448.4px;top:596.3px;font-size:17.5px;line-height:17.5px;color:#2c2c2c;letter-spacing:0.00px;font-weight:bold">1</div>
<div class="t" style="left:490.0px;top:595.5px;font-size:17px;line-height:17px;color:#2c2c2c;letter-spacing:2.64px">2024-</div>
<div class="t" style="left:490.0px;top:622.1px;font-size:17px;line-height:17px;color:#2c2c2c;letter-spacing:2.54px">06-26</div>
<div class="t" style="left:490.0px;top:648.8px;font-size:17px;line-height:17px;color:#2c2c2c;letter-spacing:0.71px">17:47:20</div>
<div class="t" style="left:599.0px;top:595.5px;font-size:17px;line-height:17px;color:#2c2c2c;letter-spacing:1.04px">PAMAEGUI7330958819</div>
<div class="t" style="left:1132.0px;top:595.5px;font-size:17px;line-height:17px;color:#2c2c2c;letter-spacing:0.13px">ESIGN CR</div>
<div class="t" style="left:1265.0px;top:595.5px;font-size:17px;line-height:17px;color:#2c2c2c;letter-spacing:1.47px">Individual</div>
<div class="t" style="left:1567.6px;top:595.5px;font-size:17px;line-height:17px;color:#2c2c2c;letter-spacing:0.87px">107.00</div>
<div class="t" style="left:1669.5px;top:595.5px;font-size:17px;line-height:17px;color:#2c2c2c;letter-spacing:0.61px">CHARIFUL</div>
<div class="t" style="left:1669.5px;top:622.1px;font-size:17px;line-height:17px;color:#2c2c2c;letter-spacing:0.51px">HUSSAIN</div>
<div class="t" style="left:448.4px;top:705.3px;font-size:17.5px;line-height:17.5px;color:#2c2c2c;letter-spacing:0.00px;font-weight:bold">2</div>
<div class="t" style="left:490.0px;top:704.5px;font-size:17px;line-height:17px;color:#2c2c2c;letter-spacing:2.64px">2024-</div>
<div class="t" style="left:490.0px;top:731.1px;font-size:17px;line-height:17px;color:#2c2c2c;letter-spacing:2.54px">06-22</div>
<div class="t" style="left:490.0px;top:757.8px;font-size:17px;line-height:17px;color:#2c2c2c;letter-spacing:0.60px">17:43:10</div>
<div class="t" style="left:599.0px;top:704.5px;font-size:17px;line-height:17px;color:#2c2c2c;letter-spacing:1.22px">PAHUTYBX4635358331</div>
<div class="t" style="left:839.0px;top:704.5px;font-size:17px;line-height:17px;color:#2c2c2c;letter-spacing:0.99px">NSDL06127929687500PSCYT</div>
<div class="t" style="left:1132.0px;top:704.5px;font-size:17px;line-height:17px;color:#2c2c2c;letter-spacing:0.76px">EKYC 49A</div>
<div class="t" style="left:1265.0px;top:704.5px;font-size:17px;line-height:17px;color:#2c2c2c;letter-spacing:1.47px">Individual</div>
<div class="t" style="left:1380.2px;top:704.5px;font-size:17px;line-height:17px;color:#2c2c2c;letter-spacing:1.17px">990039744612181</div>
<div class="t" style="left:1567.6px;top:704.5px;font-size:17px;line-height:17px;color:#2c2c2c;letter-spacing:0.87px">107.00</div>
<div class="t" style="left:1669.5px;top:704.5px;font-size:17px;line-height:17px;color:#2c2c2c;letter-spacing:0.56px">KAMALAKANTO</div>
<div class="t" style="left:1669.5px;top:731.1px;font-size:17px;line-height:17px;color:#2c2c2c;letter-spacing:0.40px">TONTOBAI</div>
<div class="t" style="left:448.4px;top:815.3px;font-size:17.5px;line-height:17.5px;color:#2c2c2c;letter-spacing:0.00px;font-weight:bold">3</div>
<div class="t" style="left:490.0px;top:814.5px;font-size:17px;line-height:17px;color:#2c2c2c;letter-spacing:2.64px">2024-</div>
<div class="t" style="left:490.0px;top:841.1px;font-size:17px;line-height:17px;color:#2c2c2c;letter-spacing:2.84px">03-02</div>
<div class="t" style="left:490.0px;top:867.8px;font-size:17px;line-height:17px;color:#2c2c2c;letter-spacing:0.98px">09:17:39</div>
<div class="t" style="left:599.0px;top:814.5px;font-size:17px;line-height:17px;color:#2c2c2c;letter-spacing:0.82px">PACIOOSX9116945489</div>
<div class="t" style="left:839.0px;top:814.5px;font-size:17px;line-height:17px;color:#2c2c2c;letter-spacing:1.29px">NSDL32373046875000XUHLX</div>
<div class="t" style="left:1132.0px;top:814.5px;font-size:17px;line-height:17px;color:#2c2c2c;letter-spacing:0.76px">EKYC 49A</div>
<div class="t" style="left:1265.0px;top:814.5px;font-size:17px;line-height:17px;color:#2c2c2c;letter-spacing:1.47px">Individual</div>
<div class="t" style="left:1567.6px;top:814.5px;font-size:17px;line-height:17px;color:#2c2c2c;letter-spacing:0.87px">107.00</div>
<div class="t" style="left:1669.5px;top:814.5px;font-size:17px;line-height:17px;color:#2c2c2c;letter-spacing:0.51px">PRINCIPRIYA</div>
<div class="t" style="left:1669.5px;top:841.1px;font-size:17px;line-height:17px;color:#2c2c2c;letter-spacing:-0.54px">GOGOI</div>
<div class="t" style="left:510.0px;top:1042.5px;font-size:17px;line-height:17px;color:#5a5a5a;letter-spacing:-0.50px">Search</div>
<div class="t" style="left:885.2px;top:1032.6px;font-size:14px;line-height:14px;color:#ffffff;letter-spacing:0.00px">4</div>
<div class="t" style="left:1636.1px;top:1043.2px;font-size:15px;line-height:15px;color:#1a1a1a;letter-spacing:0.00px;transform:scaleX(0.903);transform-origin:0.9px 0">ENG</div>
<div class="t" style="left:1829.1px;top:1031.7px;font-size:15px;line-height:15px;color:#1a1a1a;letter-spacing:0.07px">11:38</div>
<div class="t" style="left:1788.1px;top:1051.8px;font-size:15px;line-height:15px;color:#1a1a1a;letter-spacing:0.11px">30-06-2024</div>

</body></html>
